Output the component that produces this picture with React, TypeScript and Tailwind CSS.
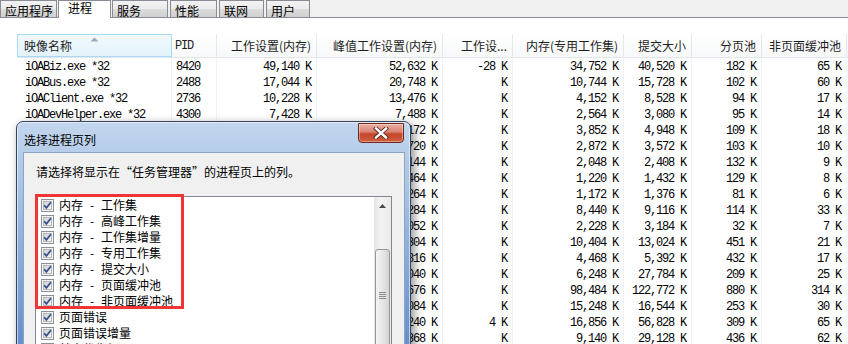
import React from 'react';

const cjk = "font-['Noto_Sans_CJK_SC',sans-serif]";
const mono = "font-['Liberation_Mono','Noto_Sans_CJK_SC',monospace] tracking-[-1.2px]";

const tabs = [
  { label: '应用程序', w: 'w-[57px]' },
  { label: '进程', w: 'w-[53px]', active: true },
  { label: '服务', w: 'w-[56px]' },
  { label: '性能', w: 'w-[47px]' },
  { label: '联网', w: 'w-[45px]' },
  { label: '用户', w: 'w-[44px]' },
];

const colW = ['w-[155px]', 'w-[45px]', 'w-[100px]', 'w-[126px]', 'w-[70px]', 'w-[111px]', 'w-[68px]', 'w-[70px]', 'w-[85px]'];

const headers = ['映像名称', 'PID', '工作设置(内存)', '峰值工作设置(内存)', '工作设...', '内存(专用工作集)', '提交大小', '分页池', '非页面缓冲池'];

const rows: string[][] = [
  ['iOABiz.exe *32', '8420', '49,140 K', '52,632 K', '-28 K', '34,752 K', '40,520 K', '182 K', '65 K'],
  ['iOABus.exe *32', '2488', '17,044 K', '20,748 K', 'K', '10,744 K', '15,728 K', '102 K', '60 K'],
  ['iOAClient.exe *32', '2736', '10,228 K', '13,476 K', 'K', '4,152 K', '8,528 K', '94 K', '17 K'],
  ['iOADevHelper.exe *32', '4300', '7,428 K', '7,488 K', 'K', '2,564 K', '3,080 K', '95 K', '14 K'],
  ['iOAProxy.exe *32', '5468', '8,136 K', '8,172 K', 'K', '3,852 K', '4,948 K', '109 K', '18 K'],
  ['iOASafe.exe *32', '3120', '6,704 K', '6,720 K', 'K', '2,872 K', '3,572 K', '103 K', '10 K'],
  ['iOATray.exe *32', '6052', '5,120 K', '5,144 K', 'K', '2,048 K', '2,408 K', '132 K', '9 K'],
  ['iOAUpdate.exe *32', '1944', '3,452 K', '3,464 K', 'K', '1,220 K', '1,432 K', '129 K', '8 K'],
  ['iOAWatch.exe *32', '4716', '3,260 K', '3,264 K', 'K', '1,172 K', '1,376 K', '81 K', '6 K'],
  ['igfxEM.exe', '3896', '15,212 K', '15,284 K', 'K', '8,440 K', '9,116 K', '114 K', '33 K'],
  ['igfxHK.exe', '3856', '6,040 K', '6,052 K', 'K', '2,228 K', '3,184 K', '32 K', '7 K'],
  ['igfxTray.exe', '3848', '18,204 K', '18,304 K', 'K', '10,404 K', '13,024 K', '451 K', '21 K'],
  ['jusched.exe *32', '5024', '9,808 K', '9,816 K', 'K', '4,468 K', '5,392 K', '432 K', '17 K'],
  ['lsass.exe', '608', '13,224 K', '14,040 K', 'K', '6,248 K', '27,784 K', '209 K', '25 K'],
  ['explorer.exe', '2612', '103,560 K', '124,676 K', 'K', '98,484 K', '122,772 K', '880 K', '314 K'],
  ['QQ.exe *32', '6988', '22,176 K', '23,084 K', 'K', '15,248 K', '16,544 K', '253 K', '30 K'],
  ['svchost.exe', '1000', '37,232 K', '59,240 K', '4 K', '16,856 K', '56,828 K', '309 K', '65 K'],
  ['svchost.exe', '1108', '21,064 K', '36,368 K', 'K', '9,140 K', '29,128 K', '436 K', '62 K'],
];

const options = [
  { a: '内存', b: '工作集', on: true },
  { a: '内存', b: '高峰工作集', on: true },
  { a: '内存', b: '工作集增量', on: true },
  { a: '内存', b: '专用工作集', on: true },
  { a: '内存', b: '提交大小', on: true },
  { a: '内存', b: '页面缓冲池', on: true },
  { a: '内存', b: '非页面缓冲池', on: true },
  { a: '页面错误', on: true },
  { a: '页面错误增量', on: true },
  { a: '基本优先级', on: false },
];

const CheckBox = ({ on }: { on: boolean }) => (
  <svg width="13" height="13" viewBox="0 0 13 13" className="shrink-0">
    <defs>
      <linearGradient id="cbIn" x1="0" y1="0" x2="1" y2="1">
        <stop offset="0" stopColor="#cbcfd5" />
        <stop offset="1" stopColor="#f6f6f6" />
      </linearGradient>
    </defs>
    <rect x="0.5" y="0.5" width="12" height="12" fill="#f4f4f4" stroke="#8e8f8f" />
    <rect x="2.5" y="2.5" width="8" height="8" fill="url(#cbIn)" stroke="#b4b9bf" />
    {on && <path d="M3.2 6.3 L5.4 8.9 L9.9 3.2" stroke="#3a5088" strokeWidth="1.7" fill="none" />}
  </svg>
);

const TabStrip = () => (
  <div className="flex h-[18px] bg-[#f0f0f0] border-b border-[#898c95]">
    {tabs.map((t) =>
      t.active ? (
        <div
          key={t.label}
          className={`${t.w} h-[18px] -ml-[1px] mr-[1px] bg-white border border-b-0 border-[#898c95] pl-[9px] text-[12px] leading-[14px] text-black ${cjk}`}
        >
          {t.label}
        </div>
      ) : (
        <div
          key={t.label}
          className={`${t.w} h-[17px] mr-[2px] border border-b-0 border-[#898c95] bg-[linear-gradient(180deg,#f2f2f2_0%,#ebebeb_50%,#dddddd_50%,#cfcfcf_100%)] pl-[4px] pt-[3px] text-[12px] leading-[14px] text-black ${cjk}`}
        >
          {t.label}
        </div>
      ),
    )}
  </div>
);

const ProcessTable = () => (
  <div className="pl-[17px] pt-[16px]">
    <div className="flex h-[24px] border-b border-[#e2e5e9] bg-[linear-gradient(180deg,#ffffff,#f7f8f9)] text-[12px] text-[#1e1e1e]">
      {headers.map((h, i) => {
        if (i === 0) {
          return (
            <div
              key={h}
              className={`${colW[i]} relative flex items-center border border-[#a9d9f4] bg-[linear-gradient(180deg,#f2f9fd,#e3f2fb)] pl-[6px] ${cjk}`}
            >
              <svg width="9" height="5" viewBox="0 0 9 5" className="absolute left-[72px] top-[2px]">
                <path d="M0.5 4.5 L4.5 0.5 L8.5 4.5 Z" fill="#97a9c2" />
              </svg>
              {h}
            </div>
          );
        }
        if (i === 1) {
          return (
            <div key={h} className={`${colW[i]} flex items-center border-r border-[#e4e7eb] pl-[3px] ${mono}`}>
              {h}
            </div>
          );
        }
        return (
          <div
            key={h}
            className={`${colW[i]} flex items-center justify-end whitespace-nowrap border-r border-[#e4e7eb] pr-[5px] ${cjk}`}
          >
            {h}
          </div>
        );
      })}
    </div>
    <div className={`mt-[1px] text-[12px] leading-[16px] text-black ${mono}`}>
      {rows.map((r, ri) => (
        <div key={ri} className="flex h-[16px]">
          {r.map((v, ci) => (
            <div
              key={ci}
              className={`${colW[ci]} whitespace-nowrap border-r border-[#eef3fa] ${
                ci === 0 ? 'pl-[8px]' : ci === 1 ? 'pl-[4px]' : 'pr-[5px] text-right'
              }`}
            >
              {v}
            </div>
          ))}
        </div>
      ))}
    </div>
  </div>
);

const CloseButton = () => (
  <div className="mt-[1px] mr-[6px] flex h-[20px] w-[46px] items-center justify-center rounded-b-[4px] border border-[#6e2a20] bg-[linear-gradient(180deg,#eab0a3_0%,#d98070_45%,#c4432b_55%,#d0603f_100%)] shadow-[inset_0_0_0_1px_rgba(255,255,255,0.35)]">
    <svg width="16" height="12" viewBox="0 0 16 12">
      <path d="M3 1.5 L13 10.5 M13 1.5 L3 10.5" stroke="#5a2a22" strokeWidth="4.2" strokeLinecap="square" />
      <path d="M3 1.5 L13 10.5 M13 1.5 L3 10.5" stroke="#ffffff" strokeWidth="2.4" strokeLinecap="square" />
    </svg>
  </div>
);

const ScrollBar = () => (
  <div className="w-[17px] shrink-0 bg-[linear-gradient(90deg,#e4e4e4,#f3f3f3_40%,#eaeaea)]">
    <div className="flex h-[17px] items-center justify-center">
      <svg width="7" height="4" viewBox="0 0 7 4">
        <path d="M0 4 L3.5 0 L7 4 Z" fill="#4a4a4a" />
      </svg>
    </div>
    <div className="mx-[1px] mt-[35px] flex h-[130px] flex-col items-center rounded-[3px] border border-[#979797] bg-[linear-gradient(90deg,#f4f4f4,#e6e6e6_50%,#d4d4d4)] pt-[42px]">
      <div className="flex flex-col gap-[1px]">
        <div className="h-[1px] w-[7px] bg-[#8d8d8d]" />
        <div className="h-[1px] w-[7px] bg-[#8d8d8d]" />
        <div className="h-[1px] w-[7px] bg-[#8d8d8d]" />
        <div className="h-[1px] w-[7px] bg-[#8d8d8d]" />
      </div>
    </div>
  </div>
);

const ColumnDialog = () => (
  <div className="absolute left-[16px] top-[121px] flex h-[240px] w-[395px] flex-col rounded-t-[7px] border border-[#34465e] bg-[linear-gradient(180deg,#c3d6ee_0%,#aac5e7_25%,#86a9da_60%,#5e8acb_100%)] shadow-[inset_0_0_0_1px_rgba(255,255,255,0.55),3px_3px_10px_rgba(0,0,0,0.45)]">
    <div className="flex h-[30px] shrink-0 items-start justify-between">
      <div className={`pl-[7px] pt-[11px] text-[12px] leading-[14px] text-black ${cjk}`}>选择进程页列</div>
      <CloseButton />
    </div>
    <div className="ml-[6px] mr-[5px] flex-1 border border-[#8ea3bd] bg-[#f0f0f0]">
      <div className={`pl-[12px] pt-[11px] text-[12px] leading-[16px] text-black ${cjk}`}>
        请选择将显示在“任务管理器”的进程页上的列。
      </div>
      <div className="ml-[11px] mt-[16px] flex h-[200px] w-[357px] border border-[#828790] bg-white">
        <div className="flex-1">
          {options.map((o) => (
            <div
              key={o.a + (o.b ?? '')}
              className={`flex h-[16px] items-center gap-[5px] pl-[5px] text-[12px] leading-[16px] text-black ${cjk}`}
            >
              <CheckBox on={o.on} />
              <span className="flex whitespace-nowrap">
                {o.a}
                {o.b && <span className="inline-block w-[18px] text-center">-</span>}
                {o.b}
              </span>
            </div>
          ))}
        </div>
        <ScrollBar />
      </div>
    </div>
  </div>
);

const App = () => {
  return (
    <div className="relative h-[344px] w-[848px] overflow-hidden bg-white">
      <TabStrip />
      <ProcessTable />
      <ColumnDialog />
      {/* red highlight box */}
      <div className="absolute left-[35px] top-[194px] h-[115px] w-[149px] border-[3px] border-[#ef3535]" />
    </div>
  );
};

export default App;
